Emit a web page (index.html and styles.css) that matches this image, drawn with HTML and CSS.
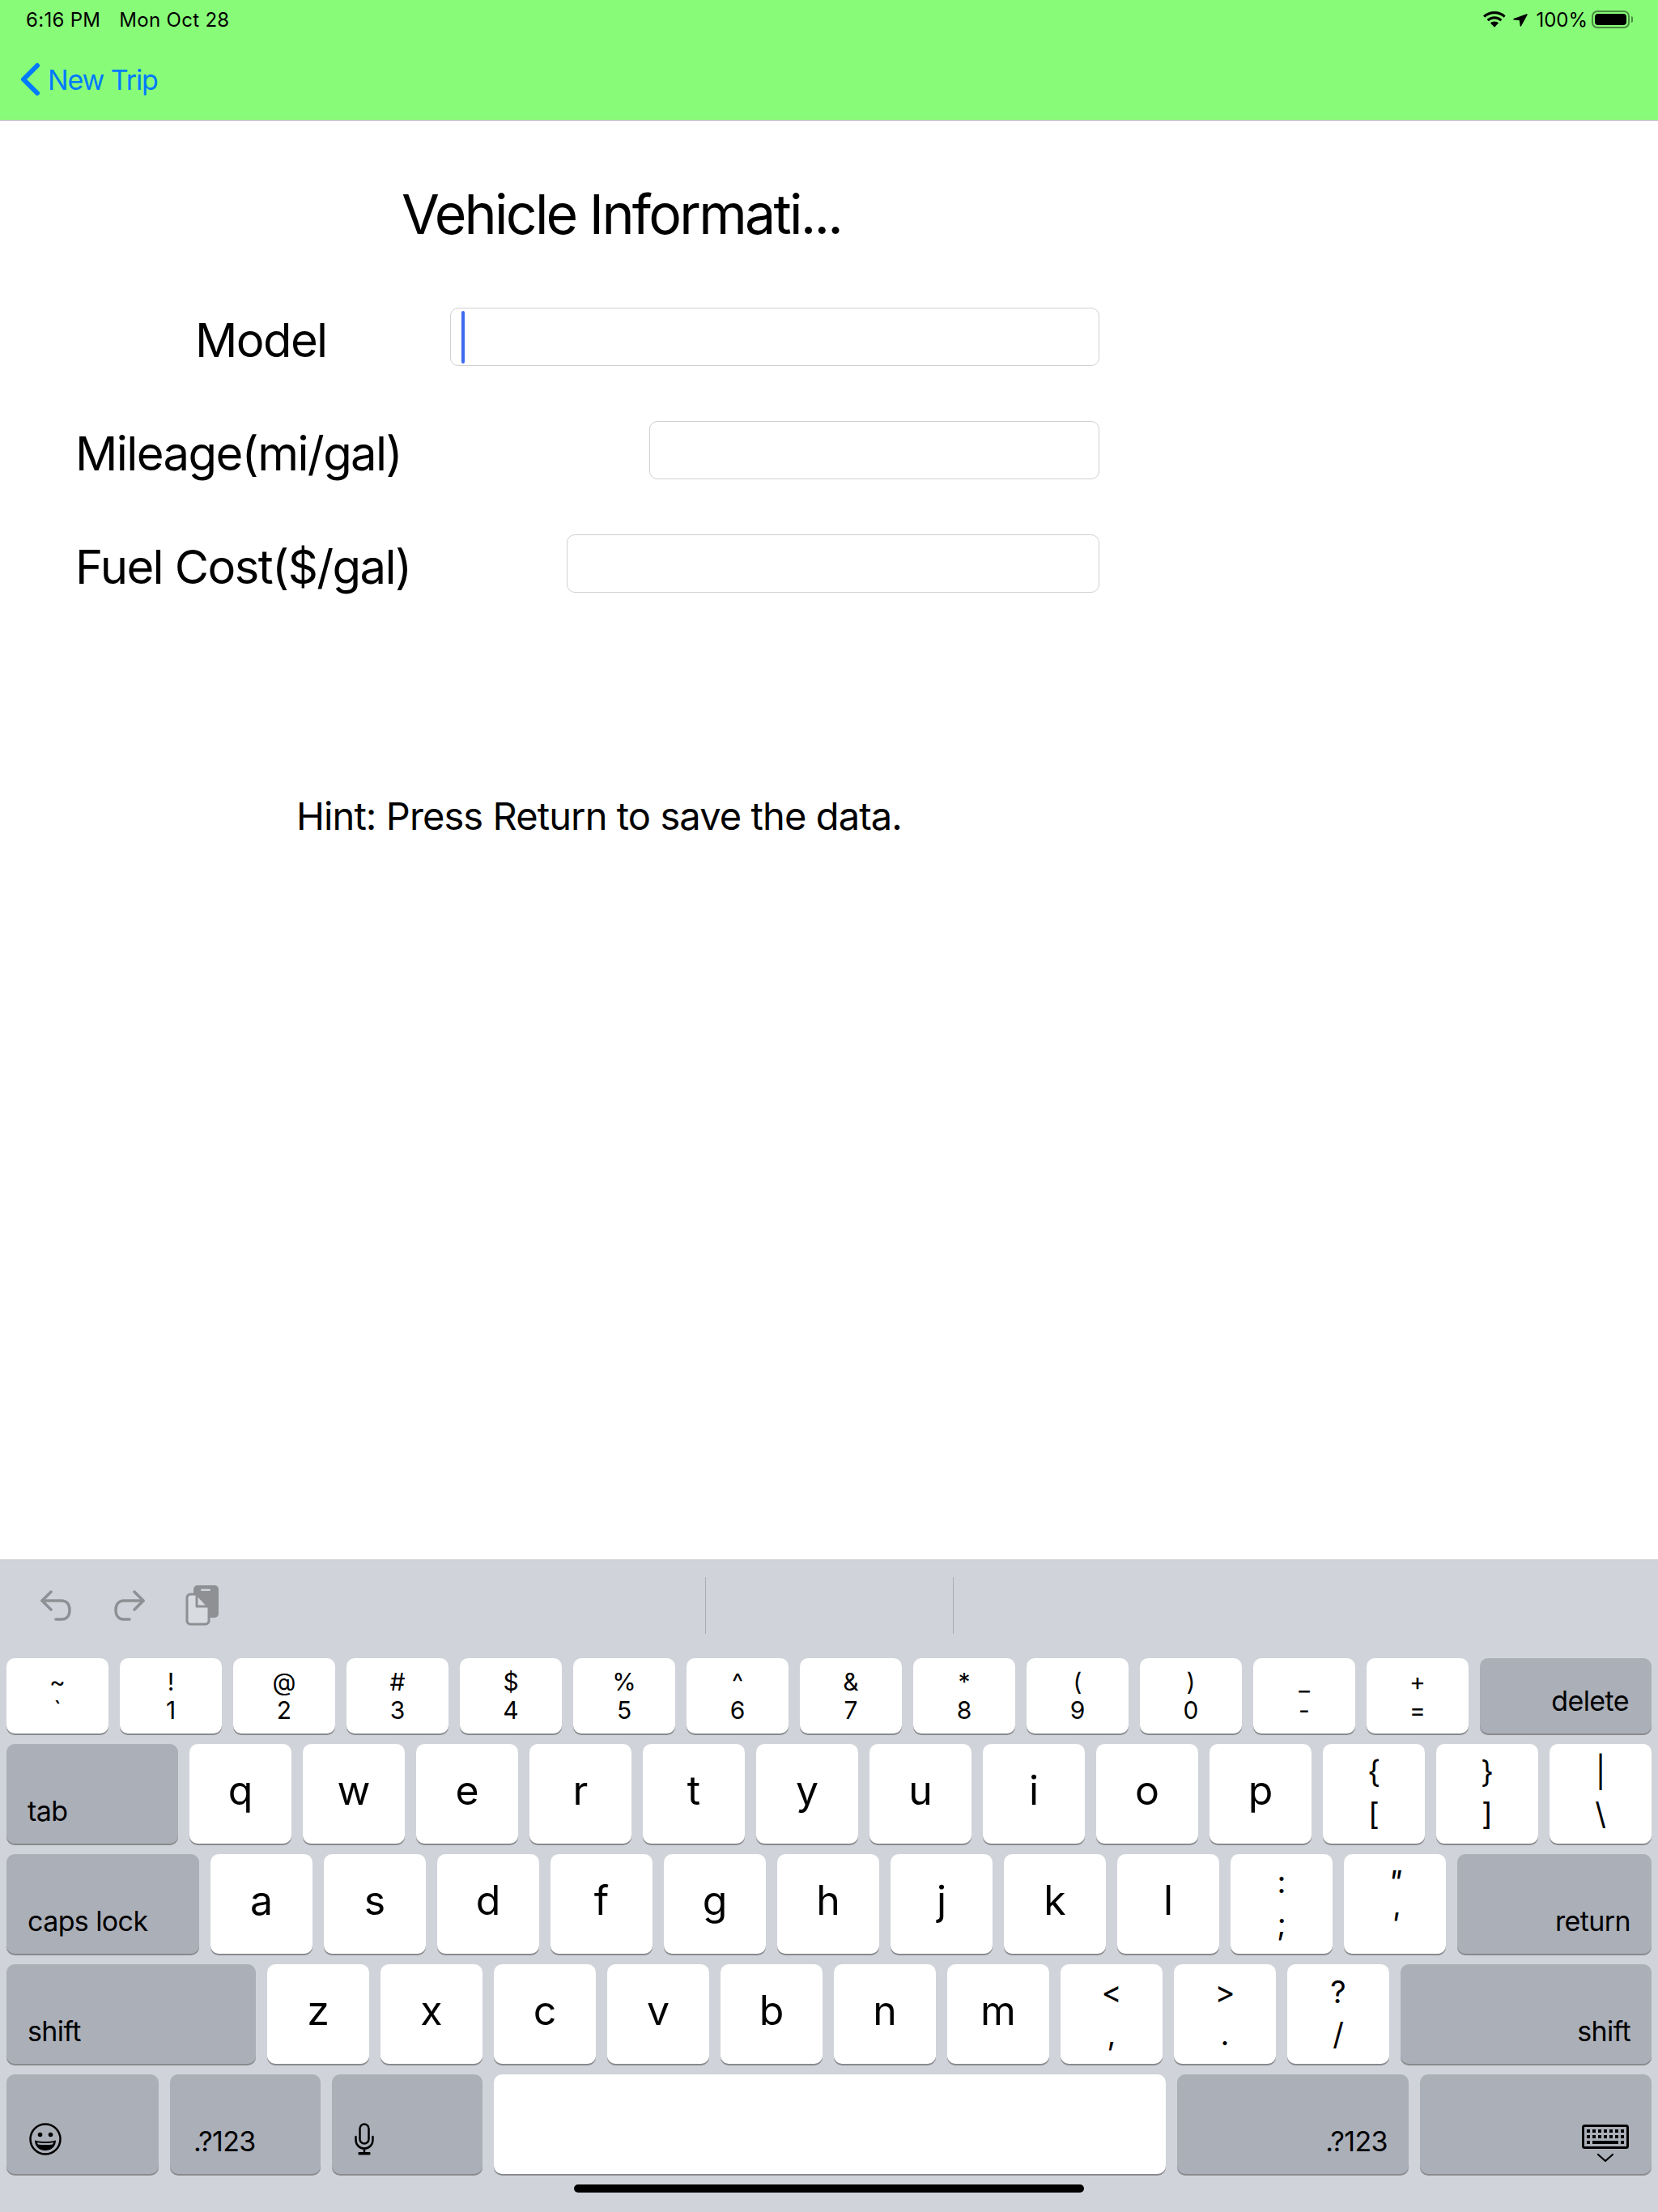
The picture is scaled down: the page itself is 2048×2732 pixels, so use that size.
FILE: index.html
```html
<!DOCTYPE html>
<html lang="en">
<head>
    <meta charset="UTF-8">
    <meta name="viewport" content="width=device-width, initial-scale=1.0">
    <title>Vehicle Information</title>
    <link rel="stylesheet" href="styles.css">
</head>
<body>
    <header class="topbar">
        <div class="status">
            <span class="time">6:16 PM</span>
            <span class="date">Mon Oct 28</span>
            <span class="status-right">
                <svg class="wifi" width="28" height="20" viewBox="0 0 28 20"><path d="M14 3.2c4.6 0 8.6 1.700 11.700 4.500l2-2.300C24.300 2 19.400 0 14 0S3.700 2 0 5.400l2.200 2.300C5.300 4.900 9.400 3.200 14 3.200z"/><path d="M14 9.400c2.900 0 5.300 1.100 7.300 2.800l2.100-2.300C20.900 7.600 17.600 6.200 14 6.200s-6.900 1.400-9.400 3.700l2.100 2.300c2-1.700 4.400-2.800 7.300-2.800z"/><path d="M14 12.500c-2 0-3.700.7-5 1.900l5 5.300 5-5.300c-1.300-1.200-3-1.900-5-1.900z"/></svg>
                <svg class="arrow" width="18" height="16" viewBox="0 0 18 16"><path d="M17 1 1 6.800l7.500.7.900 7.500z" stroke="#000" stroke-width="1.500" stroke-linejoin="round"/></svg>
                <span class="pct">100%</span>
                <span class="battery"><span class="battery-fill"></span></span>
                <span class="battery-tip"></span>
            </span>
        </div>
        <a class="back">
            <svg width="26" height="42" viewBox="0 0 26 42"><path d="M22 4 5 21l17 17" fill="none" stroke="#007aff" stroke-width="6" stroke-linecap="round" stroke-linejoin="round"/></svg>
            <span>New Trip</span>
        </a>
    </header>

    <main class="content">
        <h1 class="title">Vehicle Informati...</h1>
        <div class="row">
            <label class="label label-model">Model</label>
            <div class="field field-model"><span class="caret"></span></div>
        </div>
        <div class="row">
            <label class="label">Mileage(mi/gal)</label>
            <div class="field field-mileage"></div>
        </div>
        <div class="row">
            <label class="label">Fuel Cost($/gal)</label>
            <div class="field field-fuel"></div>
        </div>
        <p class="hint">Hint: Press Return to save the data.</p>
    </main>

    <section class="keyboard">
        <div class="toolbar">
            <svg class="tool" width="38" height="38" viewBox="0 0 38 38" fill="none" stroke="#8e9094" stroke-width="3.500" stroke-linecap="round" stroke-linejoin="round"><path d="M13 2 2 13l11 11"/><path d="M2 13h24c6 0 10 4 10 11.500S32 36 26 36h-7"/></svg>
            <svg class="tool redo" width="38" height="38" viewBox="0 0 38 38" fill="none" stroke="#8e9094" stroke-width="3.500" stroke-linecap="round" stroke-linejoin="round"><path d="m25 2 11 11-11 11"/><path d="M36 13H12C6 13 2 17 2 24.500S6 36 12 36h7"/></svg>
            <svg class="tool clip" width="42" height="50" viewBox="0 0 42 50"><rect x="10" y="0" width="31" height="40" rx="5" fill="#8e9094"/><rect x="19" y="4.500" width="12" height="2.500" rx="1" fill="#d0d3d9"/><path d="M6 11h8l15 16v17c0 2-2 4-4 4H6c-2 0-4-2-4-4V15c0-2 2-4 4-4z" fill="#d8dbe0" stroke="#8e9094" stroke-width="3" stroke-linejoin="round"/><path d="M14 11v15h15" fill="none" stroke="#8e9094" stroke-width="3" stroke-linejoin="round"/></svg>
            <span class="divider divider-a"></span>
            <span class="divider divider-b"></span>
        </div>

        <div class="keys">
            <div class="key-row num-row">
                <div class="key stack"><span>~</span><span>`</span></div>
                <div class="key stack"><span>!</span><span>1</span></div>
                <div class="key stack"><span>@</span><span>2</span></div>
                <div class="key stack"><span>#</span><span>3</span></div>
                <div class="key stack"><span>$</span><span>4</span></div>
                <div class="key stack"><span>%</span><span>5</span></div>
                <div class="key stack"><span>^</span><span>6</span></div>
                <div class="key stack"><span>&amp;</span><span>7</span></div>
                <div class="key stack"><span>*</span><span>8</span></div>
                <div class="key stack"><span>(</span><span>9</span></div>
                <div class="key stack"><span>)</span><span>0</span></div>
                <div class="key stack"><span>_</span><span>-</span></div>
                <div class="key stack"><span>+</span><span>=</span></div>
                <div class="key fn fn-right grow delete">delete</div>
            </div>
            <div class="key-row">
                <div class="key fn grow">tab</div>
                <div class="key">q</div>
                <div class="key">w</div>
                <div class="key">e</div>
                <div class="key">r</div>
                <div class="key">t</div>
                <div class="key">y</div>
                <div class="key">u</div>
                <div class="key">i</div>
                <div class="key">o</div>
                <div class="key">p</div>
                <div class="key stack big"><span>{</span><span>[</span></div>
                <div class="key stack big"><span>}</span><span>]</span></div>
                <div class="key stack big"><span>|</span><span>\</span></div>
            </div>
            <div class="key-row">
                <div class="key fn grow">caps lock</div>
                <div class="key">a</div>
                <div class="key">s</div>
                <div class="key">d</div>
                <div class="key">f</div>
                <div class="key">g</div>
                <div class="key">h</div>
                <div class="key">j</div>
                <div class="key">k</div>
                <div class="key">l</div>
                <div class="key stack big"><span>:</span><span>;</span></div>
                <div class="key stack big slant"><span>"</span><span>'</span></div>
                <div class="key fn fn-right return">return</div>
            </div>
            <div class="key-row">
                <div class="key fn grow">shift</div>
                <div class="key">z</div>
                <div class="key">x</div>
                <div class="key">c</div>
                <div class="key">v</div>
                <div class="key">b</div>
                <div class="key">n</div>
                <div class="key">m</div>
                <div class="key stack big"><span>&lt;</span><span>,</span></div>
                <div class="key stack big"><span>&gt;</span><span>.</span></div>
                <div class="key stack big"><span>?</span><span>/</span></div>
                <div class="key fn fn-right rshift">shift</div>
            </div>
            <div class="key-row">
                <div class="key fn emoji">
                    <svg width="40" height="40" viewBox="0 0 40 40"><circle cx="20" cy="20" r="18.500" fill="none" stroke="#000" stroke-width="2.500"/><circle cx="13.500" cy="14.500" r="2.800"/><circle cx="26.500" cy="14.500" r="2.800"/><path d="M7 21.500c8 2 18 2 26 0 0 8-6 12.500-13 12.500S7 29.500 7 21.500z"/><path d="M10 24c6 1.300 14 1.300 20 0-.3 1.200-.6 2-1 2.500-5 .8-13 .8-18 0-.4-.5-.8-1.300-1-2.500z" fill="#abafb8"/></svg>
                </div>
                <div class="key fn sym">.?123</div>
                <div class="key fn mic">
                    <svg width="24" height="40" viewBox="0 0 24 40"><rect x="6.500" y="1.500" width="11" height="24" rx="5.500" fill="none" stroke="#000" stroke-width="2.500"/><path d="M1.500 17v4c0 6 4.500 10.500 10.500 10.500S22.500 27 22.500 21v-4" fill="none" stroke="#000" stroke-width="2.500" stroke-linecap="round"/><path d="M12 31v6" stroke="#000" stroke-width="2.500"/><rect x="4.500" y="36" width="15" height="3.500" rx="1"/></svg>
                </div>
                <div class="key grow"></div>
                <div class="key fn fn-right sym-right">.?123</div>
                <div class="key fn fn-right hide">
                    <svg width="58" height="48" viewBox="0 0 58 48"><rect x="1.500" y="1.500" width="55" height="27" rx="2" fill="none" stroke="#000" stroke-width="3"/><g><rect x="6" y="6" width="4" height="4"/><rect x="13" y="6" width="4" height="4"/><rect x="20" y="6" width="4" height="4"/><rect x="27" y="6" width="4" height="4"/><rect x="34" y="6" width="4" height="4"/><rect x="41" y="6" width="4" height="4"/><rect x="48" y="6" width="4" height="4"/><rect x="6" y="13" width="4" height="4"/><rect x="13" y="13" width="4" height="4"/><rect x="20" y="13" width="4" height="4"/><rect x="27" y="13" width="4" height="4"/><rect x="34" y="13" width="4" height="4"/><rect x="41" y="13" width="4" height="4"/><rect x="48" y="13" width="4" height="4"/><rect x="6" y="20" width="4" height="4"/><rect x="13" y="20" width="32" height="4"/><rect x="48" y="20" width="4" height="4"/></g><path d="m20 37 9 8 9-8" fill="none" stroke="#000" stroke-width="2.200" stroke-linecap="round" stroke-linejoin="round"/></svg>
                </div>
            </div>
        </div>
        <div class="home-bar"></div>
    </section>
</body>
</html>
```

FILE: styles.css
```css
/* Pantalla iPad: barra, formulario y teclado */
body {
    font-family: Inter, "Liberation Sans", sans-serif;
    margin: 0;
    padding: 0;
    height: 2732px;
    display: flex;
    flex-direction: column;
    background-color: #fff;
    color: #000;
    overflow: hidden;
}

/* Barra superior */
.topbar {
    height: 148px;
    background-color: #88fc78;
    border-bottom: 1px solid #b2b2b2;
    flex-shrink: 0;
}
.status {
    display: flex;
    align-items: center;
    height: 48px;
    padding: 0 31px 0 32px;
    font-size: 24px;
    letter-spacing: 0.3px;
}
.date {
    margin-left: 23px;
}
.status-right {
    margin-left: auto;
    display: flex;
    align-items: center;
}
.arrow {
    margin-left: 9px;
    margin-top: 2px;
}
.pct {
    margin-left: 10px;
    letter-spacing: 0;
}
.battery {
    display: flex;
    width: 47px;
    height: 22px;
    box-sizing: border-box;
    margin-left: 5px;
    padding: 2px;
    border: 2px solid rgba(0, 0, 0, 0.45);
    border-radius: 7px;
}
.battery-fill {
    flex: 1;
    background-color: #000;
    border-radius: 4px;
}
.battery-tip {
    width: 2px;
    height: 8px;
    margin-left: 2px;
    background-color: rgba(0, 0, 0, 0.45);
    border-radius: 0 2px 2px 0;
}
.back {
    display: flex;
    align-items: center;
    height: 50px;
    margin-top: 25px;
    padding-left: 24px;
    color: #007aff;
    font-size: 34px;
    letter-spacing: -1.1px;
    gap: 9px;
}

/* Formulario */
.content {
    flex: 1;
    padding: 0 690px 0 93px;
}
.title {
    margin: 0;
    padding: 73px 0 0 403px;
    height: 84px;
    font-size: 68px;
    line-height: 84px;
    font-weight: 400;
    letter-spacing: -2.750px;
    white-space: nowrap;
}
.row {
    display: flex;
    justify-content: space-between;
    align-items: flex-start;
    height: 72px;
    margin-bottom: 68px;
}
.title + .row {
    margin-top: 74px;
}
.label {
    font-size: 58px;
    line-height: 72px;
    padding-top: 4px;
    letter-spacing: -1.6px;
}
.label-model {
    margin-left: 148px;
}
.field {
    height: 72px;
    box-sizing: border-box;
    border: 1.500px solid #d0d0d0;
    border-radius: 10px;
}
.field-model {
    width: 802px;
    padding: 3px 0 0 13px;
}
.field-mileage {
    width: 556px;
}
.field-fuel {
    width: 658px;
}
.caret {
    display: block;
    width: 4px;
    height: 65px;
    background-color: #3d6bf0;
    border-radius: 2px;
}
.hint {
    margin: 246px 0 0 273px;
    font-size: 47px;
    line-height: 60px;
    letter-spacing: -0.9px;
    white-space: nowrap;
}

/* Teclado */
.keyboard {
    height: 806px;
    flex-shrink: 0;
    background-color: #d0d3d9;
    border-top: 1px solid #c4c7cc;
    box-sizing: border-box;
}
.toolbar {
    display: flex;
    align-items: center;
    box-sizing: border-box;
    height: 121px;
    padding: 0 0 10px 50px;
}
.redo {
    margin-left: 53px;
}
.clip {
    margin-left: 50px;
}
.divider {
    width: 1px;
    height: 70px;
    background-color: #a9acb2;
}
.divider-a {
    margin-left: 600px;
}
.divider-b {
    margin-left: 305px;
}
.keys {
    padding: 0 8px;
}
.key-row {
    display: flex;
    gap: 14px;
    height: 123px;
    margin-bottom: 13px;
}
.num-row {
    height: 93px;
}
.key {
    width: 126px;
    flex-shrink: 0;
    display: flex;
    align-items: center;
    justify-content: center;
    box-sizing: border-box;
    background-color: #fff;
    border-radius: 10px;
    box-shadow: 0 2px 0 #898a8d;
    font-size: 50px;
    padding-bottom: 9px;
}
.grow {
    flex: 1;
    width: auto;
}
.stack {
    flex-direction: column;
    font-size: 30px;
    line-height: 35px;
    padding-bottom: 0;
}
.big {
    font-size: 38px;
    line-height: 52px;
    padding-bottom: 4px;
}
.slant {
    font-style: italic;
}
.fn {
    background-color: #abafb8;
    font-size: 34px;
    line-height: 40px;
    letter-spacing: -0.6px;
    align-items: flex-end;
    justify-content: flex-start;
    padding: 0 0 20px 26px;
}
.fn-right {
    justify-content: flex-end;
    padding: 0 26px 20px 0;
}
.delete {
    padding-right: 28px;
}
.return {
    width: 240px;
}
.rshift {
    width: 310px;
}
.emoji {
    width: 188px;
    padding: 0 0 23px 28px;
}
.sym {
    width: 186px;
    padding: 0 0 20px 29px;
}
.mic {
    width: 186px;
    padding: 0 0 23px 28px;
}
.sym-right {
    width: 286px;
}
.hide {
    width: 286px;
    padding: 0 28px 13px 0;
}
.home-bar {
    width: 630px;
    height: 10px;
    margin: 13px auto 0;
    background-color: #000;
    border-radius: 5px;
}
```
